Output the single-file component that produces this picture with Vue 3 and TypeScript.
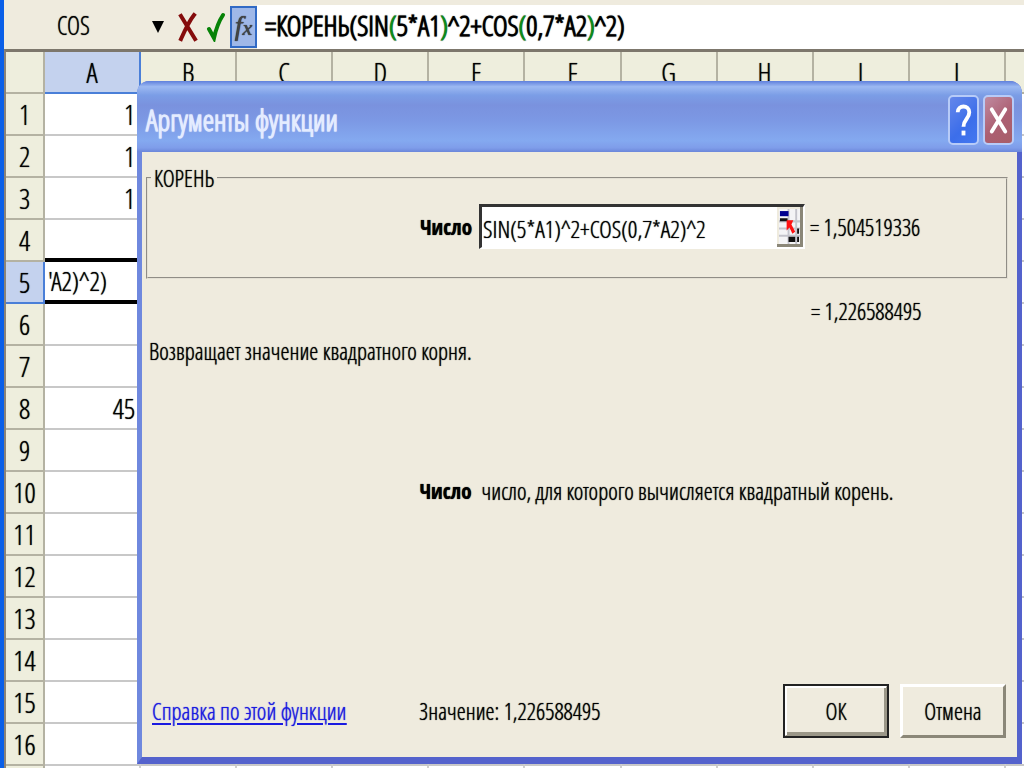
<script setup lang="ts">
import { ref } from 'vue'

const columns: string[] = ['A', 'B', 'C', 'D', 'E', 'F', 'G', 'H', 'I', 'J', '']
const rows: number[] = Array.from({ length: 16 }, (_, i) => i + 1)
const cells: Record<number, string> = { 1: '1', 2: '1', 3: '1', 5: "'A2)^2)", 8: '45' }
const activeRow = 5

const argument = ref('SIN(5*A1)^2+COS(0,7*A2)^2')
const fn = ref('COS')
</script>

<template>
  <main class="window">
    <header class="bar">
      <div class="name-box">
        <select v-model="fn" aria-label="Функция">
          <option>COS</option>
          <option>SIN</option>
        </select>
        <svg class="caret" viewBox="0 0 12 12" aria-hidden="true"><path d="M0 0H12L6 12Z" fill="#000" /></svg>
      </div>
      <button class="tool" type="button" aria-label="Отменить ввод">
        <svg viewBox="0 0 20 30" aria-hidden="true">
          <path d="M3 4L17 27M16 3C12 8 7 18 3 27" fill="none" stroke="#850c0c" stroke-width="4" stroke-linecap="square" />
        </svg>
      </button>
      <button class="tool" type="button" aria-label="Ввод">
        <svg viewBox="0 0 20 30" aria-hidden="true">
          <path d="M3 17L8 26C10 17 13 9 17 3" fill="none" stroke="#078307" stroke-width="4" stroke-linecap="round" />
        </svg>
      </button>
      <button class="fx" type="button" aria-label="Вставить функцию"><i>f<small>x</small></i></button>
      <div class="formula" role="textbox" aria-label="Строка формул" contenteditable="true" spellcheck="false">=КОРЕНЬ(SIN<span>(</span>5*A1<span>)</span>^2+COS<span>(</span>0,7*A2<span>)</span>^2)</div>
    </header>

    <div class="sheet">
      <table>
        <colgroup>
          <col class="col-num" />
          <col v-for="(c, i) in columns" :key="i" class="col-cell" />
        </colgroup>
        <thead>
          <tr>
            <th></th>
            <th v-for="(c, i) in columns" :key="i" scope="col" :class="{ active: c === 'A' }">{{ c }}</th>
          </tr>
        </thead>
        <tbody>
          <tr v-for="r in rows" :key="r" :class="{ current: r === activeRow, above: r === activeRow - 1 }">
            <th scope="row" :class="{ active: r === activeRow }">{{ r }}</th>
            <td v-for="(c, i) in columns" :key="i">{{ i === 0 ? cells[r] : '' }}</td>
          </tr>
          <tr>
            <th></th>
            <td v-for="(c, i) in columns" :key="i"></td>
          </tr>
        </tbody>
      </table>
    </div>

    <section class="dialog" role="dialog" aria-labelledby="dialog-title">
      <div class="title-bar">
        <h1 id="dialog-title">Аргументы функции</h1>
        <button class="caption help" type="button" aria-label="Справка">
          <svg viewBox="0 0 28 46" aria-hidden="true">
            <path d="M8 15C8 7 20 7 20 15C20 22 14 22 14 30" fill="none" stroke="#fff" stroke-width="4" />
            <path d="M12 34H16V39H12Z" fill="#fff" />
          </svg>
        </button>
        <button class="caption close" type="button" aria-label="Закрыть">
          <svg viewBox="0 0 28 46" aria-hidden="true">
            <path d="M7 12L21 35M21 12L7 35" fill="none" stroke="#fff" stroke-width="4" stroke-linecap="round" />
          </svg>
        </button>
      </div>

      <form class="body" @submit.prevent>
        <fieldset>
          <legend>КОРЕНЬ</legend>
          <div class="row">
            <label class="name" for="arg">Число</label>
            <div class="field">
              <input id="arg" v-model="argument" type="text" spellcheck="false" />
              <button class="picker" type="button" aria-label="Свернуть окно">
                <svg viewBox="0 0 22 34" preserveAspectRatio="none" aria-hidden="true">
                  <path d="M0 0H22V34H0Z" fill="#f4f4f6" />
                  <path d="M10 0V34M18 0V34M0 12H22M0 19H22M0 26H22" stroke="#c4c4cc" stroke-width="2" />
                  <path d="M1 2H10V7H1Z" fill="#000090" />
                  <path d="M1 9H9V12H1ZM10 27H17V32H10ZM19 27H21V32H19ZM19 19H21V24H19Z" fill="#111" />
                  <path d="M8 11H15L13 15L17 22L14 24L11 18L8 21Z" fill="#f11" />
                </svg>
              </button>
            </div>
            <output for="arg">= 1,504519336</output>
          </div>
        </fieldset>

        <div class="row total"><output>= 1,226588495</output></div>
        <p class="about">Возвращает значение квадратного корня.</p>
        <p class="row hint"><b class="name">Число</b><span>число, для которого вычисляется квадратный корень.</span></p>

        <footer>
          <a href="#help">Справка по этой функции</a>
          <p>Значение: 1,226588495</p>
          <button class="push default" type="submit">ОК</button>
          <button class="push" type="button">Отмена</button>
        </footer>
      </form>
    </section>
  </main>
</template>

<style>
html,
body {
  margin: 0;
  overflow: hidden;
}
</style>

<style scoped>
* {
  box-sizing: border-box;
}

.window {
  position: relative;
  display: flex;
  flex-direction: column;
  height: 100vh;
  overflow: hidden;
  border-left: 4px solid #0a5fe8;
  background: #efebde;
  color: #000;
  font-family: 'Open Sans Condensed Light', 'Roboto Condensed', 'Liberation Sans', sans-serif;
  font-size: 23px;
  text-shadow: 0 0 1px #000;
}

button,
input,
select {
  font: inherit;
  color: inherit;
  text-shadow: inherit;
}

.bar {
  display: flex;
  flex: none;
  align-items: center;
  height: 49px;
  padding-top: 4px;
}

.name-box {
  display: grid;
  width: 170px;
  height: 42px;
  align-items: center;
}

.name-box select {
  grid-area: 1 / 1;
  height: 42px;
  padding: 0 0 4px 53px;
  border: 0;
  background: transparent;
  appearance: none;
  font-size: 25px;
}

.caret {
  grid-area: 1 / 1;
  justify-self: end;
  width: 12px;
  height: 12px;
  margin-right: 10px;
  pointer-events: none;
}

.tool {
  width: 28px;
  height: 42px;
  padding: 0 3px;
  border: 0;
  background: none;
}

.tool svg {
  display: block;
  width: 22px;
  height: 30px;
}

.fx {
  width: 27px;
  height: 42px;
  padding: 0;
  border: 2px solid #316ac5;
  background: #9fb8e8;
  color: #444;
  font-family: 'Liberation Serif', serif;
  font-size: 28px;
  line-height: 32px;
}

.fx small {
  font-size: 22px;
}

.formula {
  flex: 1;
  height: 44px;
  padding-left: 8px;
  background: #fff;
  font-size: 28px;
  font-weight: bold;
  line-height: 40px;
  text-shadow: 0 0 1px #555;
  white-space: nowrap;
}

.formula span {
  color: #0a8c1a;
}

.sheet {
  flex: 1;
  overflow: hidden;
  border-top: 3px solid #7d776c;
  border-left: 2px solid #8a8378;
  background: #fff;
}

table {
  width: 1096px;
  table-layout: fixed;
  border-collapse: separate;
  border-spacing: 0;
  font-size: 28px;
}

.col-num {
  width: 39px;
}

.col-cell {
  width: 96px;
}

th,
td {
  height: 42px;
  padding: 0;
  border-right: 2px solid #d0d0d0;
  border-bottom: 2px solid #c8c8c8;
  line-height: 36px;
  white-space: nowrap;
}

th {
  border-color: #b4b2a2;
  background: #eeeedd;
  font-weight: normal;
}

th.active {
  border-color: #4a7fd8;
  background: #c4d2ee;
}

td {
  padding-right: 4px;
  text-align: right;
}

.above td:nth-child(2) {
  border-bottom: 4px solid #000;
}

.current td:nth-child(2) {
  border-bottom: 4px solid #000;
  padding: 0 0 0 3px;
  font-size: 26px;
  text-align: left;
}

.dialog {
  position: absolute;
  top: 81px;
  right: 2px;
  bottom: 4px;
  left: 133px;
  display: flex;
  flex-direction: column;
  border: solid #6f88de;
  border-width: 0 5px 7px 5px;
  border-right-color: #5462cc;
  border-bottom-color: #5462cc;
  border-radius: 12px 12px 0 0;
  background: #6f88de;
}

.title-bar {
  display: flex;
  flex: none;
  align-items: center;
  height: 71px;
  margin: 0 -5px;
  padding: 6px 8px 0 9px;
  gap: 4px;
  border-radius: 12px 12px 0 0;
  background: linear-gradient(#5f80dc 0, #9cb9f2 8%, #7b9de6 20%, #7a92de 34%, #7c98e4 55%, #84a9f0 84%, #7f9dea 94%, #6c87da 100%);
}

h1 {
  flex: 1;
  margin: 0;
  color: #e4ecff;
  font-size: 29px;
  line-height: 36px;
  text-shadow: 0 0 1px #e4ecff;
}

.caption {
  width: 31px;
  height: 50px;
  padding: 0;
  border: 2px solid #b7cbf8;
  border-radius: 5px;
  background: linear-gradient(135deg, #6587ea, #3c6eea 60%, #4478f0);
}

.caption.close {
  background: linear-gradient(135deg, #c08aa0, #ac5f72 55%, #a85e68);
}

.caption svg {
  display: block;
  width: 100%;
  height: 100%;
}

.body {
  display: flex;
  flex: 1;
  flex-direction: column;
  padding: 14px 9px 19px 4px;
  background: #efebde;
}

fieldset {
  min-width: 0;
  margin: 0;
  padding: 14px 0 28px;
  border: 2px groove #e4e0d4;
}

legend {
  margin-left: 3px;
  padding: 0 3px;
  line-height: 24px;
}

.row {
  display: grid;
  grid-template-columns: 38% 38% 1fr;
  column-gap: 5px;
  align-items: center;
  margin: 0;
}

.name {
  padding-right: 2px;
  font-family: 'Open Sans Condensed', 'Roboto Condensed', 'Liberation Sans', sans-serif;
  font-size: 21px;
  font-weight: bold;
  text-align: right;
}

.field {
  display: flex;
  height: 45px;
  border: solid;
  border-width: 3px 2px 2px 3px;
  border-color: #333 #fff #fff #333;
  background: #fff;
}

.field input {
  flex: 1;
  min-width: 0;
  padding: 2px 1px 0;
  border: 0;
  background: transparent;
  outline: 0;
  font-size: 24px;
}

.picker {
  width: 26px;
  padding: 2px 0 0 2px;
  border: solid #8b8778;
  border-width: 0 3px 3px 0;
  background: #efebde;
}

.picker svg {
  display: block;
  width: 100%;
  height: 100%;
}

.total {
  margin-top: 18px;
  line-height: 28px;
}

.total output {
  grid-column: 3;
}

.about {
  margin: 12px 3px 0;
  line-height: 28px;
}

.hint {
  margin-top: 112px;
  line-height: 28px;
}

.hint span {
  grid-column: 2 / 4;
  padding-left: 3px;
}

footer {
  display: grid;
  grid-template-columns: 30% 1fr 106px 106px;
  column-gap: 11px;
  align-items: center;
  margin-top: auto;
  padding: 0 2px 0 6px;
}

footer a {
  color: #1a1ae0;
  text-shadow: 0 0 1px #1a1ae0;
  text-underline-offset: 3px;
}

footer p {
  margin: 0;
}

.push {
  height: 54px;
  padding: 0;
  border: solid;
  border-width: 3px;
  border-color: #fff #8b8778 #8b8778 #fff;
  background: #efebde;
}

.push.default {
  border-color: #fff #9b9788 #9b9788 #fff;
  outline: 2px solid #222;
  outline-offset: -2px;
  box-shadow: inset 1px 1px 0 #fff, inset -2px -3px 0 #9b9788;
}
</style>
